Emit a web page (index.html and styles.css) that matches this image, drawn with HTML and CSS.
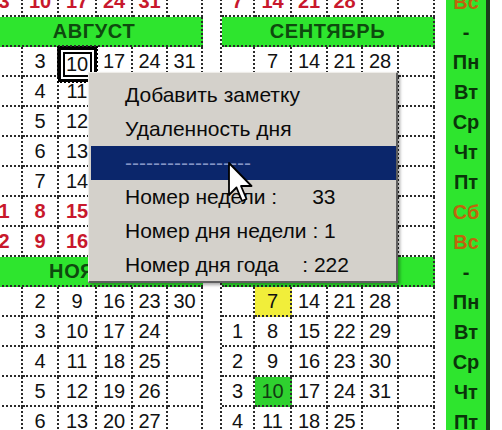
FILE: index.html
```html
<!DOCTYPE html>
<html lang="ru">
<head>
<meta charset="utf-8">
<title>Календарь</title>
<link rel="stylesheet" href="styles.css">
</head>
<body>
<div class="page">
  <div class="cal cal-left">
    <div class="c r">3</div><div class="c r">10</div><div class="c r">17</div><div class="c r">24</div><div class="c r">31</div><div class="c"></div>
    <div class="h">АВГУСТ</div>
    <div class="c"></div><div class="c">3</div><div class="c"><span class="sel">10</span></div><div class="c">17</div><div class="c">24</div><div class="c">31</div>
    <div class="c"></div><div class="c">4</div><div class="c">11</div><div class="c">18</div><div class="c">25</div><div class="c"></div>
    <div class="c"></div><div class="c">5</div><div class="c">12</div><div class="c">19</div><div class="c">26</div><div class="c"></div>
    <div class="c"></div><div class="c">6</div><div class="c">13</div><div class="c">20</div><div class="c">27</div><div class="c"></div>
    <div class="c"></div><div class="c">7</div><div class="c">14</div><div class="c">21</div><div class="c">28</div><div class="c"></div>
    <div class="c r">1</div><div class="c r">8</div><div class="c r">15</div><div class="c r">22</div><div class="c r">29</div><div class="c"></div>
    <div class="c r">2</div><div class="c r">9</div><div class="c r">16</div><div class="c r">23</div><div class="c r">30</div><div class="c"></div>
    <div class="h">НОЯБРЬ</div>
    <div class="c"></div><div class="c">2</div><div class="c">9</div><div class="c">16</div><div class="c">23</div><div class="c">30</div>
    <div class="c"></div><div class="c">3</div><div class="c">10</div><div class="c">17</div><div class="c">24</div><div class="c"></div>
    <div class="c"></div><div class="c">4</div><div class="c">11</div><div class="c">18</div><div class="c">25</div><div class="c"></div>
    <div class="c"></div><div class="c">5</div><div class="c">12</div><div class="c">19</div><div class="c">26</div><div class="c"></div>
    <div class="c"></div><div class="c">6</div><div class="c">13</div><div class="c">20</div><div class="c">27</div><div class="c"></div>
  </div>

  <div class="cal cal-right">
    <div class="c r">7</div><div class="c r">14</div><div class="c r">21</div><div class="c r">28</div><div class="c"></div><div class="c"></div>
    <div class="h">СЕНТЯБРЬ</div>
    <div class="c"></div><div class="c">7</div><div class="c">14</div><div class="c">21</div><div class="c">28</div><div class="c"></div>
    <div class="c">1</div><div class="c">8</div><div class="c">15</div><div class="c">22</div><div class="c">29</div><div class="c"></div>
    <div class="c">2</div><div class="c">9</div><div class="c">16</div><div class="c">23</div><div class="c">30</div><div class="c"></div>
    <div class="c">3</div><div class="c">10</div><div class="c">17</div><div class="c">24</div><div class="c"></div><div class="c"></div>
    <div class="c">4</div><div class="c">11</div><div class="c">18</div><div class="c">25</div><div class="c"></div><div class="c"></div>
    <div class="c r">5</div><div class="c r">12</div><div class="c r">19</div><div class="c r">26</div><div class="c"></div><div class="c"></div>
    <div class="c r">6</div><div class="c r">13</div><div class="c r">20</div><div class="c r">27</div><div class="c"></div><div class="c"></div>
    <div class="h">ДЕКАБРЬ</div>
    <div class="c"></div><div class="c yel">7</div><div class="c">14</div><div class="c">21</div><div class="c">28</div><div class="c"></div>
    <div class="c">1</div><div class="c">8</div><div class="c">15</div><div class="c">22</div><div class="c">29</div><div class="c"></div>
    <div class="c">2</div><div class="c">9</div><div class="c">16</div><div class="c">23</div><div class="c">30</div><div class="c"></div>
    <div class="c">3</div><div class="c grn">10</div><div class="c">17</div><div class="c">24</div><div class="c">31</div><div class="c"></div>
    <div class="c">4</div><div class="c">11</div><div class="c">18</div><div class="c">25</div><div class="c"></div><div class="c"></div>
  </div>

  <div class="days">
    <div class="d we">Вс</div>
    <div class="d">-</div>
    <div class="d">Пн</div>
    <div class="d">Вт</div>
    <div class="d">Ср</div>
    <div class="d">Чт</div>
    <div class="d">Пт</div>
    <div class="d we">Сб</div>
    <div class="d we">Вс</div>
    <div class="d">-</div>
    <div class="d">Пн</div>
    <div class="d">Вт</div>
    <div class="d">Ср</div>
    <div class="d">Чт</div>
    <div class="d">Пт</div>
  </div>

  <div class="menu">
    <div class="mi">Добавить заметку</div>
    <div class="mi">Удаленность дня</div>
    <div class="mi on">------------------</div>
    <div class="mi">Номер недели :      33</div>
    <div class="mi">Номер дня недели : 1</div>
    <div class="mi">Номер дня года    : 222</div>
  </div>

  <svg class="cursor" width="26" height="42" viewBox="0 0 26 42">
    <path d="M1 1 L1 33 L8.5 25.5 L14 39 L18.5 37 L13 24 L23.5 24 Z" fill="#fff" stroke="#000" stroke-width="1.8" stroke-linejoin="round"/>
  </svg>
</div>
</body>
</html>
```
FILE: styles.css
```css
html, body {
  margin: 0;
  padding: 0;
  background: #fff;
}
body {
  font-family: "Liberation Sans", Arial, sans-serif;
  overflow: hidden;
}
.page {
  position: relative;
  width: 502px;
  height: 430px;
  overflow: hidden;
  display: flex;
  align-items: flex-start;
  background: #fff;
}
.cal {
  display: grid;
  grid-auto-rows: 30px;
  margin-top: -13px;
  flex: none;
}
.cal-left {
  grid-template-columns: 36px 36px 38px 36px 35px 35px;
  margin-left: -13px;
}
.cal-right {
  grid-template-columns: 33px 37px 36px 35px 36px 36px;
  margin-left: 17px;
  border-left: 2px dotted #2a2a2a;
}
.c {
  box-sizing: border-box;
  border-right: 2px dotted #2a2a2a;
  border-bottom: 2px dotted #2a2a2a;
  display: flex;
  align-items: center;
  justify-content: center;
  font-size: 20px;
  color: #111;
  padding-top: 1px;
}
.c.r {
  color: #c8182c;
  font-weight: bold;
}
.c.yel {
  background: #f1ee3a;
}
.c.grn {
  background: #2fd12f;
  color: #123a12;
}
.sel {
  display: flex;
  align-items: center;
  justify-content: center;
  box-sizing: border-box;
  width: 39px;
  height: 35px;
  margin: 3px -2px -3px -2px;
  border: 3px solid #000;
  outline: 2px dotted #000;
  outline-offset: -1px;
  background: #fff;
  box-shadow: inset 0 0 0 2px #fff, inset 0 0 0 4px #000;
  position: relative;
  z-index: 1;
}
.h {
  grid-column: 1 / -1;
  box-sizing: border-box;
  background: #2ee52e;
  border-right: 2px dotted #2a2a2a;
  border-bottom: 2px dotted #2a2a2a;
  display: flex;
  align-items: center;
  justify-content: center;
  font-weight: bold;
  font-size: 20px;
  letter-spacing: 0.6px;
  color: #0e4a0e;
}
.days {
  flex: none;
  margin-left: 11px;
  margin-top: -13px;
  width: 40px;
  background: #2ee52e;
  border-right: 4px solid #1c3c1c;
  display: flex;
  flex-direction: column;
}
.d {
  height: 30px;
  display: flex;
  align-items: center;
  justify-content: center;
  font-weight: bold;
  font-size: 20px;
  color: #0a340a;
}
.d.we {
  color: #bf650c;
}
.menu {
  position: absolute;
  left: 88px;
  top: 72px;
  width: 310px;
  height: 211px;
  box-sizing: border-box;
  background: #d4d1cb;
  border-style: solid;
  border-width: 1px 2px 2px 1px;
  border-color: #eeece8 #5f5f5f #5f5f5f #eeece8;
  box-shadow: 2px 2px 3px rgba(0, 0, 0, 0.35);
  padding: 5px 0 0 2px;
  font-size: 21px;
  z-index: 2;
}
.mi {
  height: 34px;
  line-height: 34px;
  padding-left: 34px;
  white-space: pre;
  color: #0a0a0a;
}
.mi.on {
  background: #0b266b;
  color: #8494c6;
}
.cursor {
  position: absolute;
  left: 228px;
  top: 162px;
  z-index: 3;
}
```
